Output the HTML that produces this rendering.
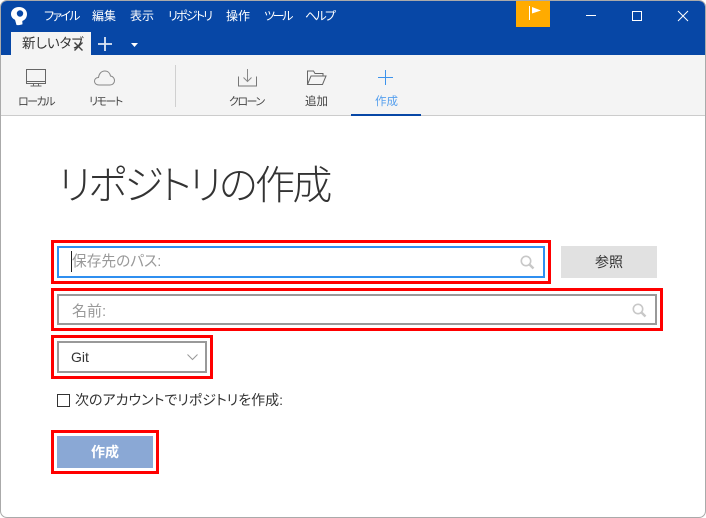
<!DOCTYPE html>
<html lang="ja"><head><meta charset="utf-8">
<style>
*{box-sizing:border-box;margin:0;padding:0}
html,body{width:706px;height:518px;overflow:hidden;background:#fff}
body{font-family:"Liberation Sans","Noto Sans CJK JP",sans-serif;position:relative;color:#333;font-feature-settings:"palt"}
.a{position:absolute;white-space:nowrap;line-height:1}
.m{color:#fff;font-size:12px;top:10px}
.t{font-size:11.5px;top:97px;color:#444}
.k{font-size:11px;letter-spacing:-1.5px}
.r{position:absolute;border:3px solid #f00}
.i{position:absolute;border:2px solid #999;background:#fff}
.ph{color:#999;font-size:15px}
svg{position:absolute;overflow:visible}
</style></head><body>
<div class="a" style="left:0;top:0;width:706px;height:518px;background:#fff;border:1px solid #aaa;border-radius:7px;overflow:hidden">
<div class="a" style="left:0;top:0;width:704px;height:54px;background:#0747a6"></div>
<div class="a" style="left:0;top:54px;width:704px;height:61px;background:#f4f4f4;border-bottom:1px solid #ccc"></div>
</div>

<svg style="left:10px;top:6px" width="18" height="20" viewBox="0 0 18 20"><path d="M9 1C4.500 1 1 4 1 8c0 2.800 1.800 4.800 4 5.800L6.500 19c1.800.3 4.200-.1 6-.8L12.300 15C15 14 17 11.500 17 8 17 4 13.500 1 9 1z" fill="#fff"/><circle cx="10" cy="7.500" r="3.200" fill="#0747a6"/></svg>

<div class="a m" style="left:44px;letter-spacing:-1.7px">ファイル</div>
<div class="a m" style="left:92px">編集</div>
<div class="a m" style="left:130px">表示</div>
<div class="a m" style="left:168px;letter-spacing:-1.8px">リポジトリ</div>
<div class="a m" style="left:226px">操作</div>
<div class="a m" style="left:264px;letter-spacing:-2.3px">ツール</div>
<div class="a m" style="left:305px;letter-spacing:-1.7px">ヘルプ</div>

<div class="a" style="left:11px;top:32px;width:80px;height:23px;background:#f4f4f4"></div>
<div class="a" style="left:22px;top:37px;font-size:13.5px;color:#333">新しいタブ</div>
<svg style="left:74px;top:42px" width="9" height="9"><path d="M.5.500l8 8M8.500.500l-8 8" stroke="#444" stroke-width="1.400" fill="none"/></svg>
<svg style="left:98px;top:37px" width="14" height="14"><path d="M7 0v14M0 7h14" stroke="#dfe8f5" stroke-width="1.800" fill="none"/></svg>
<svg style="left:131px;top:43px" width="7" height="4"><path d="M0 0h7L3.500 4z" fill="#fff"/></svg>

<div class="a" style="left:516px;top:1px;width:34px;height:26px;background:#ffab00"></div>
<svg style="left:528px;top:6px" width="14" height="15"><path d="M1.500 0v14" stroke="#fff" fill="none"/><path d="M4 1l9 3.500-9 3z" fill="#fff"/></svg>
<svg style="left:586px;top:15px" width="11" height="2"><path d="M0 .500h10" stroke="#fff" fill="none"/></svg>
<svg style="left:632px;top:11px" width="10" height="10"><rect x=".5" y=".5" width="9" height="9" fill="none" stroke="#fff"/></svg>
<svg style="left:678px;top:11px" width="10" height="10"><path d="M0 0l10 10M10 0L0 10" stroke="#fff" fill="none"/></svg>

<svg style="left:26px;top:69px" width="20" height="18" fill="none" stroke="#666"><rect x=".5" y=".5" width="19" height="14"/><path d="M.5 12.500h19M7.500 14.500v2M12.500 14.500v2M4.500 17h11" /></svg>
<svg style="left:94px;top:70px" width="21" height="16" fill="none" stroke="#888"><path d="M5 15C2.500 15 .5 13.500.5 11.300.5 9 2.200 7.500 4.500 7.500 5 3.500 7.500 1 10.800 1c3.200 0 5.200 2.200 5.700 5 2.500.3 4 2.300 4 4.600 0 2.500-2 4.400-4.500 4.400z"/></svg>
<svg style="left:238px;top:69px" width="19" height="18" fill="none" stroke="#777"><path d="M.5 7.500v9.500h18V7.500"/><path d="M9.500 0v12M5.500 8.500l4 4 4-4" stroke="#888"/></svg>
<svg style="left:306px;top:70px" width="21" height="15" fill="none" stroke="#666"><path d="M1.500 14V1h6l1.500 2.500h8V6"/><path d="M1.500 14.500h15L20 6H5z" /></svg>
<svg style="left:378px;top:70px" width="15" height="15" fill="none" stroke="#3c93ec"><path d="M7.500 0v15M0 7.500h15"/></svg>
<div class="a" style="left:175px;top:65px;width:1px;height:42px;background:#d0d0d0"></div>

<div class="a t k" style="left:18px">ローカル</div>
<div class="a t k" style="left:89px">リモート</div>
<div class="a t k" style="left:229px">クローン</div>
<div class="a t" style="left:305px">追加</div>
<div class="a t" style="left:375px;color:#57a0ee">作成</div>
<div class="a" style="left:351px;top:114px;width:70px;height:2px;background:#0747a6"></div>

<div class="a" style="left:58px;top:166px;font-size:40px;color:#333;font-weight:300;letter-spacing:-2.6px">リポジトリの作成</div>

<div class="r" style="left:51px;top:240px;width:500px;height:44px"></div>
<div class="i" style="left:57px;top:246px;width:488px;height:32px;border-color:#2f8ff0"></div>
<div class="a" style="left:71px;top:251px;width:1px;height:21px;background:#222"></div>
<div class="a ph" style="left:72px;top:255px;font-size:14.7px">保存先のパス:</div>
<svg style="left:520px;top:255px" width="15" height="15" fill="none" stroke="#c8c8c8"><circle cx="6" cy="6" r="4.700" stroke-width="1.600"/><path d="M9.500 9.500l4 4" stroke-width="2.400"/></svg>
<div class="a" style="left:561px;top:246px;width:96px;height:32px;background:#e1e1e1"></div>
<div class="a" style="left:595px;top:255px;font-size:14px;color:#333">参照</div>

<div class="r" style="left:51px;top:288px;width:612px;height:43px"></div>
<div class="i" style="left:57px;top:294px;width:600px;height:31px"></div>
<div class="a ph" style="left:72px;top:304px">名前:</div>
<svg style="left:632px;top:303px" width="15" height="15" fill="none" stroke="#c8c8c8"><circle cx="6" cy="6" r="4.700" stroke-width="1.600"/><path d="M9.500 9.500l4 4" stroke-width="2.400"/></svg>

<div class="r" style="left:51px;top:335px;width:162px;height:44px"></div>
<div class="i" style="left:57px;top:341px;width:150px;height:32px"></div>
<div class="a" style="left:71px;top:350px;font-size:14px;color:#333">Git</div>
<svg style="left:187px;top:354px" width="11" height="6" fill="none" stroke="#999"><path d="M.5.500L5.500 5.500 10.500.500"/></svg>

<div class="a" style="left:57px;top:394px;width:13px;height:13px;border:1px solid #333;background:#fff"></div>
<div class="a" style="left:75px;top:393px;font-size:14px;color:#333">次のアカウントでリポジトリを作成:</div>

<div class="r" style="left:51px;top:430px;width:108px;height:44px"></div>
<div class="a" style="left:57px;top:436px;width:96px;height:32px;background:#8aa8d5"></div>
<div class="a" style="left:91px;top:445px;font-size:14px;color:#fff;font-weight:700">作成</div>
</body></html>
